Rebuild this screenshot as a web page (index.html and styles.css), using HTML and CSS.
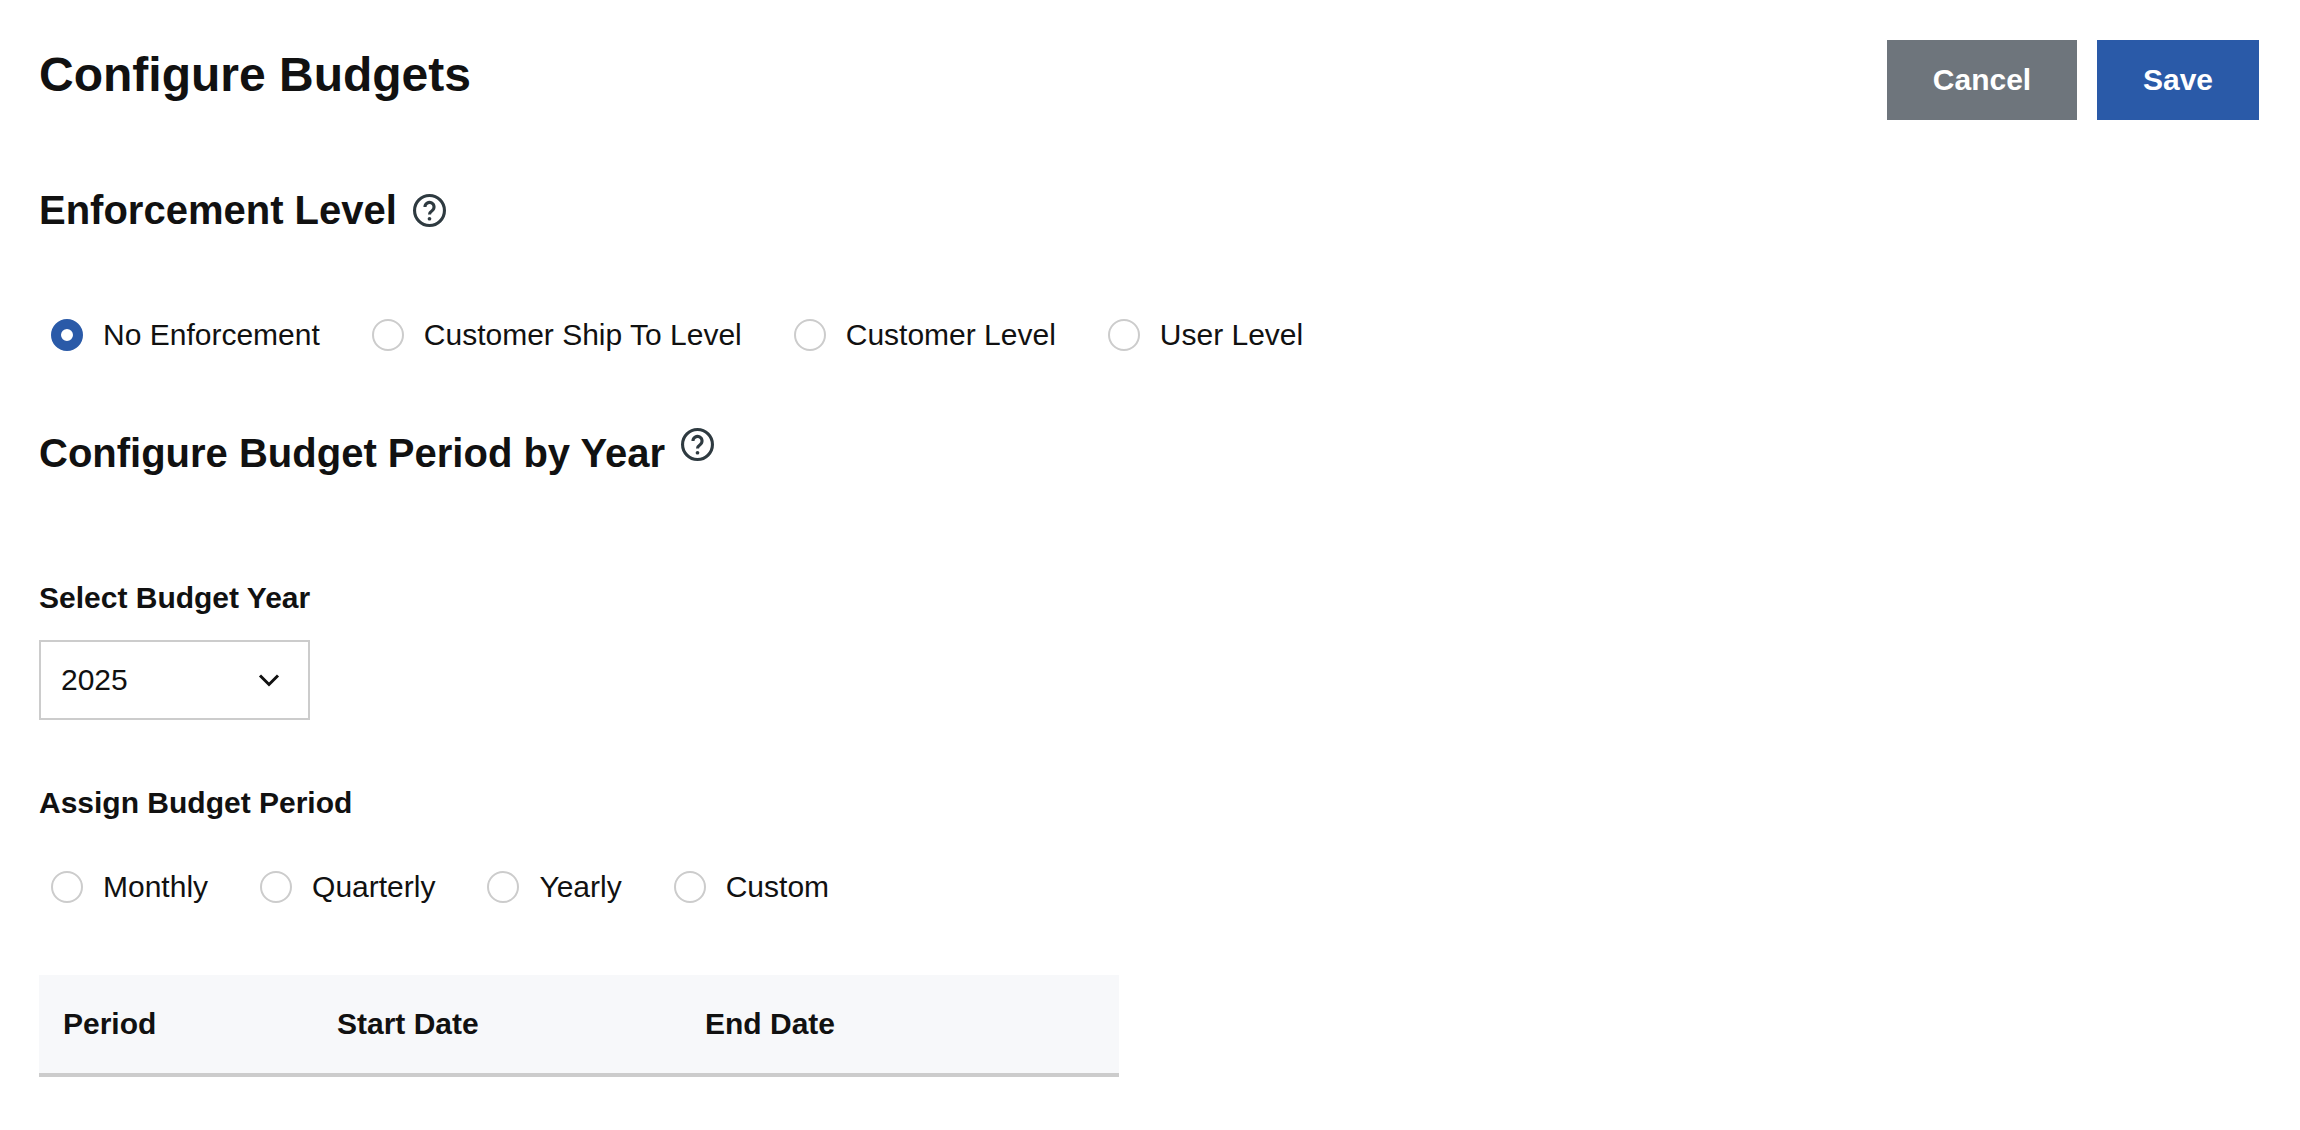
FILE: index.html
```html
<!DOCTYPE html>
<html lang="en">
<head>
<meta charset="utf-8">
<title>Configure Budgets</title>
<link rel="stylesheet" href="styles.css">
</head>
<body>
<main class="page">
  <header class="top">
    <h1 class="title">Configure Budgets</h1>
    <div class="actions">
      <button class="btn btn-cancel" type="button">Cancel</button>
      <button class="btn btn-save" type="button">Save</button>
    </div>
  </header>

  <section class="enforcement">
    <h2 class="heading">Enforcement Level
      <svg class="help" viewBox="0 0 32 32" aria-hidden="true"><circle cx="16" cy="16" r="14.5"/><path d="M11.6 12.6a4.4 4.4 0 1 1 6.9 3.6c-1.6 1.1-2.5 1.9-2.5 3.6"/><circle class="dot" cx="16" cy="24" r="1.8"/></svg>
    </h2>
    <div class="radios radios-first">
      <label class="radio"><span class="mark mark-on"></span>No Enforcement</label>
      <label class="radio"><span class="mark"></span>Customer Ship To Level</label>
      <label class="radio"><span class="mark"></span>Customer Level</label>
      <label class="radio"><span class="mark"></span>User Level</label>
    </div>
  </section>

  <section class="period">
    <h2 class="heading heading-raised">Configure Budget Period by Year
      <svg class="help help-raised" viewBox="0 0 32 32" aria-hidden="true"><circle cx="16" cy="16" r="14.5"/><path d="M11.6 12.6a4.4 4.4 0 1 1 6.9 3.6c-1.6 1.1-2.5 1.9-2.5 3.6"/><circle class="dot" cx="16" cy="24" r="1.8"/></svg>
    </h2>
    <div class="label label-year">Select Budget Year</div>
    <div class="select">
      <span>2025</span>
      <svg class="chev" viewBox="0 0 22 14" aria-hidden="true"><path d="M2 2.5l9 9 9-9"/></svg>
    </div>
    <div class="label label-assign">Assign Budget Period</div>
    <div class="radios radios-second">
      <label class="radio"><span class="mark"></span>Monthly</label>
      <label class="radio"><span class="mark"></span>Quarterly</label>
      <label class="radio"><span class="mark"></span>Yearly</label>
      <label class="radio"><span class="mark"></span>Custom</label>
    </div>
    <div class="thead">
      <div class="th th-period">Period</div>
      <div class="th th-start">Start Date</div>
      <div class="th">End Date</div>
    </div>
  </section>
</main>
</body>
</html>
```
FILE: styles.css
```css
* { box-sizing: border-box; }
html, body { margin: 0; padding: 0; background: #fff; }
body {
  font-family: "Liberation Sans", Arial, sans-serif;
  color: #111;
  height: 1130px;
  overflow: hidden;
}
.page { padding: 40px 41px 0 39px; }
.top { display: flex; justify-content: space-between; align-items: flex-start; }
.title { margin: 0; font-size: 48px; line-height: 70px; font-weight: 700; }
.actions { display: flex; gap: 20px; }
.btn {
  height: 80px; border: 0; color: #fff;
  font: 700 30px "Liberation Sans", Arial, sans-serif;
}
.btn-cancel { width: 190px; background: #6e757c; }
.btn-save { width: 162px; background: #2a5aa8; }
.heading {
  margin: 0; font-size: 40px; line-height: 50px; font-weight: 700;
  display: flex; align-items: center; gap: 16px;
}
.enforcement { padding-top: 65px; }
.help { width: 33px; height: 33px; flex: none; fill: none; stroke: #2e3a40; stroke-width: 3; }
.help path { stroke-linecap: butt; }
.help .dot { fill: #2e3a40; stroke: none; }
.help-raised { position: relative; top: -9px; }
.radios { display: flex; padding-left: 12px; font-size: 30px; }
.radios-first { gap: 52px; margin-top: 82px; }
.radios-second { gap: 52px; margin-top: 48px; }
.radio { display: flex; align-items: center; gap: 20px; line-height: 36px; }
.mark {
  width: 32px; height: 32px; border-radius: 50%;
  border: 2.5px solid #ccc; background: #fff; flex: none;
}
.mark-on { border: 10px solid #2a5aa8; }
.period { padding-top: 75px; }
.label { font-size: 30px; line-height: 36px; font-weight: 700; }
.label-year { margin-top: 102px; }
.label-assign { margin-top: 65px; }
.select {
  margin-top: 24px; width: 271px; height: 80px;
  border: 2px solid #ccc; padding: 0 28px 0 20px;
  display: flex; align-items: center; justify-content: space-between;
  font-size: 30px;
}
.chev { width: 22px; height: 14px; fill: none; stroke: #111; stroke-width: 3; }
.thead {
  margin-top: 70px; width: 1080px; height: 102px;
  background: #f7f8fa; border-bottom: 4px solid #ccc;
  display: flex; align-items: center; padding-left: 24px;
}
.th { font-size: 30px; font-weight: 700; }
.th-period { width: 274px; }
.th-start { width: 368px; }
```
